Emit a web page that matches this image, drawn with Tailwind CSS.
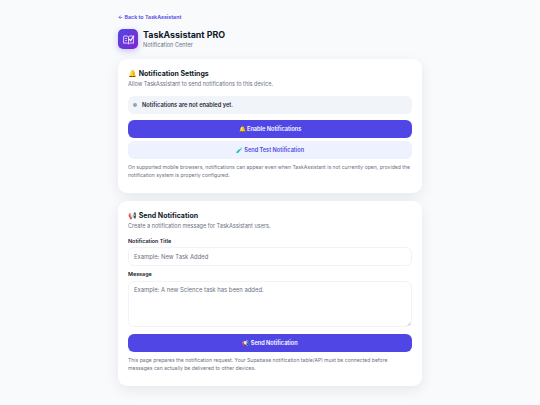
<!DOCTYPE html>
<html><head><script src="https://cdn.jsdelivr.net/npm/@tailwindcss/browser@4"></script></head>
<body class="bg-[#f8fafc] font-['Inter','Noto_Sans',sans-serif] text-[#111827] antialiased">
<div class="w-[304px] mx-auto pt-[13px] pb-[18px]">
<a class="block text-[5.35px] font-semibold text-[#4f46e5] h-[9px] leading-[9px]">← Back to TaskAssistant</a>
<div class="flex items-center gap-[5px] mt-[7px] mb-[10px] h-[20px]">
<div class="w-[20px] h-[20px] rounded-[5px] bg-gradient-to-br from-[#4f46e5] to-[#7e22ce] shadow-[0_2px_6px_rgba(79,70,229,0.3)] flex items-center justify-center"><svg width="13" height="13" viewBox="0 0 24 24" fill="none" stroke="#ddd6fe" stroke-width="1.8"><path d="M3 6v13c3-1 6-1 9 1 3-2 6-2 9-1V6c-3-1-6-1-9 1-3-2-6-2-9-1z"/><path d="M12 7v13M6 10h3M6 14h3"/><path d="M13 11l3 3 6-9" stroke="#fff" stroke-width="2.2"/></svg></div>
<div><div class="text-[8.9px] font-bold leading-[12px]">TaskAssistant PRO</div><div class="text-[5.6px] text-[#6b7280] leading-[9px]">Notification Center</div></div>
</div>
<div class="bg-white rounded-[9px] shadow-[0_4px_14px_rgba(15,23,42,0.08)] px-[10px] pt-[8px] h-[134px]">
<h2 class="text-[7px] font-bold leading-[13px]">🔔 Notification Settings</h2>
<p class="text-[5.55px] text-[#6b7280] leading-[9px]">Allow TaskAssistant to send notifications to this device.</p>
<div class="flex items-center gap-[5px] bg-[#f1f5f9] rounded-[6px] h-[18px] px-[5px] mt-[7px] text-[5.7px] font-semibold text-[#1f2937]"><span class="w-[4px] h-[4px] rounded-full bg-[#94a3b8]"></span>Notifications are not enabled yet.</div>
<button class="block w-full bg-[#4f46e5] rounded-[6px] h-[18px] mt-[6px] text-[5.6px] font-semibold text-white">🔔 Enable Notifications</button>
<button class="block w-full bg-[#eef2ff] rounded-[6px] h-[18px] mt-[3px] text-[5.6px] font-semibold text-[#4f46e5]">🧪 Send Test Notification</button>
<p class="text-[5.1px] text-[#6b7280] leading-[8px] mt-[4px]">On supported mobile browsers, notifications can appear even when TaskAssistant is not currently open, provided the notification system is properly configured.</p>
</div>
<div class="bg-white rounded-[9px] shadow-[0_4px_14px_rgba(15,23,42,0.08)] px-[10px] pt-[8px] mt-[8px] h-[185px]">
<h2 class="text-[7px] font-bold leading-[13px]">📢 Send Notification</h2>
<p class="text-[5.55px] text-[#6b7280] leading-[9px]">Create a notification message for TaskAssistant users.</p>
<label class="block text-[5.4px] font-semibold leading-[9px] mt-[6px]">Notification Title</label>
<input class="block w-full border border-[#f1f3f6] rounded-[6px] h-[19px] mt-[1px] px-[5px] text-[5.9px] placeholder:text-[#6b7280]" placeholder="Example: New Task Added">
<label class="block text-[5.4px] font-semibold leading-[9px] mt-[4px]">Message</label>
<div class="relative mt-[2px]">
<textarea class="block w-full resize-none border border-[#f1f3f6] rounded-[6px] h-[46px] px-[5px] pt-[4px] text-[5.9px] placeholder:text-[#6b7280]" placeholder="Example: A new Science task has been added."></textarea>
<svg class="absolute right-[1px] bottom-[1px]" width="4" height="4" viewBox="0 0 4 4" stroke="#9ca3af" stroke-width="0.5"><path d="M0.5 3.5L3.5 0.5M2 3.5L3.5 2"/></svg>
</div>
<button class="block w-full bg-[#4f46e5] rounded-[6px] h-[18px] mt-[7px] text-[5.6px] font-semibold text-white">📢 Send Notification</button>
<p class="text-[5.1px] text-[#6b7280] leading-[8px] mt-[4px]">This page prepares the notification request. Your Supabase notification table/API must be connected before messages can actually be delivered to other devices.</p>
</div>
</div>
</body></html>
